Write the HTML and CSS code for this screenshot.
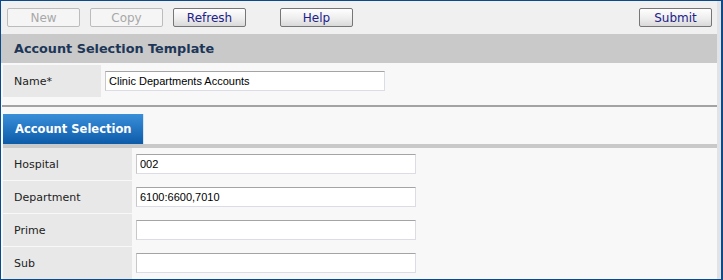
FILE: index.html
```html
<!DOCTYPE html>
<html lang="en">
<head>
  <meta charset="UTF-8">
  <title>Account Selection Template</title>
  <link rel="stylesheet" href="styles.css">
</head>
<body>

  <div class="window">
    <div class="pane">

      <!-- top toolbar -->
      <div class="toolbar">
        <button class="btn" disabled>New</button>
        <button class="btn" disabled>Copy</button>
        <button class="btn">Refresh</button>
        <button class="btn help">Help</button>
        <button class="btn submit">Submit</button>
      </div>

      <div class="section-title">Account Selection Template</div>

      <div class="name-row">
        <div class="label name-label">Name*</div>
        <input class="field" type="text" value="Clinic Departments Accounts">
      </div>
      <div class="rule"></div>

      <div class="tabs">
        <div class="tab">Account Selection</div>
      </div>
      <div class="tab-rule"></div>

      <div class="rows">
        <div class="row">
          <div class="label row-label">Hospital</div>
          <input class="field" type="text" value="002">
        </div>
        <div class="row">
          <div class="label row-label">Department</div>
          <input class="field" type="text" value="6100:6600,7010">
        </div>
        <div class="row">
          <div class="label row-label">Prime</div>
          <input class="field" type="text" value="">
        </div>
        <div class="row">
          <div class="label row-label">Sub</div>
          <input class="field" type="text" value="">
        </div>
      </div>

    </div>
    <div class="edge"></div>
  </div>

</body>
</html>
```

FILE: styles.css
```css
body {
  margin: 0;
  background-color: #ffffff;
  font-family: "DejaVu Sans", Verdana, sans-serif;
}

.window {
  width: 723px;
  height: 280px;
  box-sizing: border-box;
  border: 1px solid #0b4a8b;
  border-right-width: 2px;
  display: flex;
  overflow: hidden;
}

.pane {
  flex: 1;
  background-color: #f8f8f8;
  display: flex;
  flex-direction: column;
}

.edge {
  width: 4px;
  background-color: #e2e3e6;
}

/* Toolbar */
.toolbar {
  height: 33px;
  box-sizing: border-box;
  padding: 7px 5px 0 6px;
  background-color: #f0f0f0;
  display: flex;
  align-items: flex-start;
  gap: 10px;
  flex-shrink: 0;
}

.btn {
  width: 73px;
  height: 19px;
  box-sizing: border-box;
  padding: 0;
  border: 1px solid #767676;
  border-radius: 2px;
  background: linear-gradient(#fefefe, #eeeeee 55%, #d9d9d9);
  font-family: "DejaVu Sans", Verdana, sans-serif;
  font-size: 12px;
  line-height: 16px;
  color: #22218a;
}

.btn:disabled {
  border-color: #bcbcbc;
  background: #f5f5f5;
  color: #a8a8a8;
}

.help {
  margin-left: 24px;
}

.submit {
  margin-left: auto;
}

/* Section header */
.section-title {
  height: 29px;
  line-height: 29px;
  padding-left: 13px;
  background-color: #c8c9c8;
  font-weight: bold;
  font-size: 12.8px;
  color: #1d3658;
  flex-shrink: 0;
}

.name-row {
  display: flex;
  align-items: center;
  gap: 4px;
  padding: 2px 0 8px 2px;
}

.label {
  height: 32px;
  line-height: 30px;
  box-sizing: border-box;
  padding: 2px 0 0 11px;
  background-color: #e8e8e8;
  font-size: 11px;
  color: #222222;
}

.name-label {
  width: 98px;
}

.field {
  width: 280px;
  height: 20px;
  box-sizing: border-box;
  margin: 0;
  padding: 0 3px;
  border: 1px solid #dcdce4;
  border-top-color: #a4a4a4;
  border-left-color: #c8c8c8;
  background-color: #ffffff;
  font-family: "Liberation Sans", Arial, sans-serif;
  font-size: 11px;
  color: #000000;
  outline: none;
}

.rule {
  height: 2px;
  margin-left: 1px;
  background-color: #a3a3a3;
}

/* Tab strip */
.tabs {
  display: flex;
  padding: 7px 0 0 2px;
}

.tab {
  width: 141px;
  height: 30px;
  line-height: 30px;
  box-sizing: border-box;
  padding-left: 12px;
  background: linear-gradient(#3a8fd9, #0c5ba9);
  border-right: 1px solid #d6e4f2;
  font-weight: bold;
  font-size: 11.5px;
  color: #ffffff;
}

.tab-rule {
  height: 4px;
  margin-left: 2px;
  background-color: #c8c9c8;
}

/* Field rows */
.rows {
  display: flex;
  flex-direction: column;
  gap: 1px;
  padding-left: 2px;
}

.row {
  display: flex;
  align-items: center;
  gap: 4px;
}

.row-label {
  width: 129px;
}
```
